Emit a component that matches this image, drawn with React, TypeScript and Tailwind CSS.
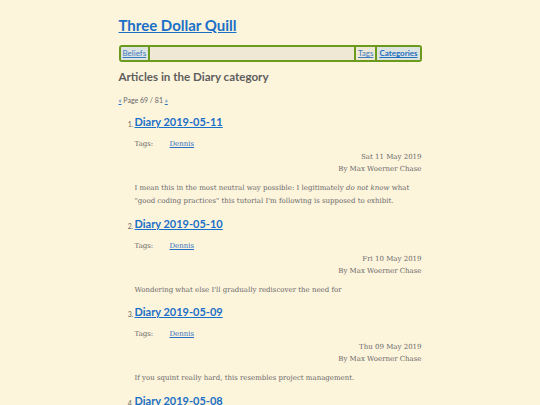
import * as React from "react";

// ─── Data ─────────────────────────────────────────────────────────────────────

interface Article {
  title: string;
  date: string;
  excerpt: React.ReactNode;
}

const ARTICLES: Article[] = [
  {
    title: "Diary 2019-05-11",
    date: "Sat 11 May 2019",
    excerpt: (
      <>
        I mean this in the most neutral way possible: I legitimately <em>do not know</em> what
        "good coding practices" this tutorial I'm following is supposed to exhibit.
      </>
    ),
  },
  {
    title: "Diary 2019-05-10",
    date: "Fri 10 May 2019",
    excerpt: <>Wondering what else I'll gradually rediscover the need for</>,
  },
  {
    title: "Diary 2019-05-09",
    date: "Thu 09 May 2019",
    excerpt: <>If you squint really hard, this resembles project management.</>,
  },
  {
    title: "Diary 2019-05-08",
    date: "Wed 08 May 2019",
    excerpt: <>…</>,
  },
];

const SANS = "font-['Lato','Open_Sans',sans-serif]";
const SERIF = "font-['DejaVu_Serif','Liberation_Serif',serif]";

// ─── Pieces ───────────────────────────────────────────────────────────────────

function NavBar() {
  return (
    <nav className={`mt-[9px] flex h-[17px] items-stretch overflow-hidden rounded-[3px] border-2 border-[#6b9a1c] bg-[#eee8d5] text-[8px] leading-[13px] ${SANS}`}>
      <a href="#" className="bg-[#dde3df] px-[2px] text-[#3a7cc4] underline">
        Beliefs
      </a>
      <span className="w-[2px] bg-[#6b9a1c]" />
      <span className="flex-1" />
      <span className="w-[2px] bg-[#6b9a1c]" />
      <a href="#" className="px-[2px] text-[#3a7cc4] underline">
        Tags
      </a>
      <span className="w-[2px] bg-[#6b9a1c]" />
      <a href="#" className="bg-[#dde3df] px-[2px] font-bold text-[#1f6fbf] underline">
        Categories
      </a>
    </nav>
  );
}

function ArticleItem({ n, article }: { n: number; article: Article }) {
  return (
    <li className="flex">
      <span className={`w-[16px] pr-[1px] pt-[5px] text-right text-[7px] text-[#666666] ${SANS}`}>{n}.</span>
      <div className="flex-1">
        <h3 className={`text-[11px] font-bold leading-[16px] ${SANS}`}>
          <a href="#" className="text-[#1a6fc7] underline">
            {article.title}
          </a>
        </h3>
        <div className={`text-[7px] text-[#6a6a6a] ${SERIF}`}>
          <div className="mt-[8px] flex leading-[12px]">
            <span className="w-[35px]">Tags:</span>
            <a href="#" className="text-[#2a70c2] underline">
              Dennis
            </a>
          </div>
          <div className="mt-[1px] text-right leading-[12px]">
            <div>{article.date}</div>
            <div>By Max Woerner Chase</div>
          </div>
          <p className="mt-[7px] leading-[13px]">{article.excerpt}</p>
        </div>
      </div>
    </li>
  );
}

// ─── Page ─────────────────────────────────────────────────────────────────────

export default function App() {
  return (
    <div className="min-h-screen bg-[#fdf4dc]">
      <div className="mx-auto w-[303px] pt-[14px]">
        <h1 className={`text-[15px] font-bold leading-[22px] ${SANS}`}>
          <a href="#" className="text-[#1a6fc7] underline">
            Three Dollar Quill
          </a>
        </h1>
        <NavBar />
        <h2 className={`mt-[6px] text-[11.6px] font-bold leading-[18px] text-[#5e5e5e] ${SANS}`}>
          Articles in the Diary category
        </h2>
        <div className={`mt-[9px] text-[7px] leading-[10px] text-[#666666] ${SANS}`}>
          <a href="#" className="text-[#2a70c2] underline">«</a> Page 69 / 81{" "}
          <a href="#" className="text-[#2a70c2] underline">»</a>
        </div>
        <ol className="mt-[9px] flex flex-col gap-[7.5px]">
          {ARTICLES.map((a, i) => (
            <ArticleItem key={a.title} n={i + 1} article={a} />
          ))}
        </ol>
      </div>
    </div>
  );
}
